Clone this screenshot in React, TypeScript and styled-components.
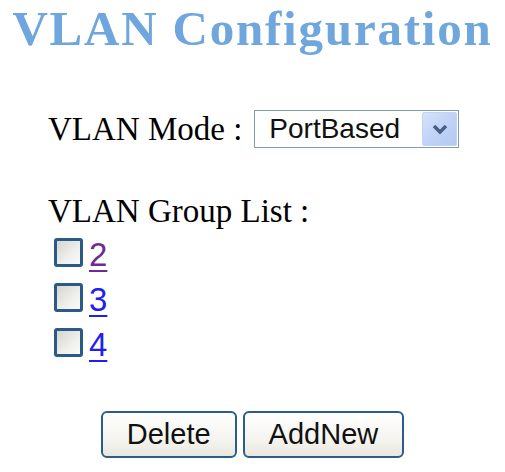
import React, { useState } from 'react';
import styled, { createGlobalStyle } from 'styled-components';

const GlobalStyle = createGlobalStyle`
  body {
    margin: 0;
    background: #fff;
    font-family: "Liberation Serif", "Times New Roman", serif;
    color: #000;
  }
`;

const Page = styled.div`
  display: flex;
  flex-direction: column;
  width: 505px;
`;

const Title = styled.h1`
  margin: 0;
  text-align: center;
  font-size: 49px;
  line-height: 57px;
  letter-spacing: 1.8px;
  font-weight: bold;
  color: #6ea6dd;
`;

const Content = styled.div`
  display: flex;
  flex-direction: column;
  padding-left: 48px;
  margin-top: 53px;
`;

const Row = styled.div`
  display: flex;
  align-items: center;
  height: 38px;
`;

const Label = styled.span`
  font-size: 33px;
  line-height: 38px;
  white-space: pre;
`;

const Select = styled.div`
  display: flex;
  align-items: center;
  box-sizing: border-box;
  width: 205px;
  height: 38px;
  margin-left: 12px;
  padding-left: 14px;
  border: 1px solid #7f9db9;
  background: #fff;
  font-family: "Liberation Sans", Arial, sans-serif;
  font-size: 28px;
  color: #111;
`;

const ArrowButton = styled.span`
  display: flex;
  align-items: center;
  justify-content: center;
  box-sizing: border-box;
  margin-left: auto;
  margin-right: 1px;
  width: 35px;
  height: 34px;
  border: 1px solid #c3d3f2;
  border-radius: 2px;
  background: linear-gradient(135deg, #d6e2fb 0%, #c1d3f7 50%, #b3c8f3 100%);
`;

const GroupLabel = styled(Label)`
  margin-top: 44px;
`;

const List = styled.div`
  display: flex;
  flex-direction: column;
  padding-left: 6px;
`;

const Item = styled.div`
  display: flex;
  align-items: center;
  gap: 6px;
  height: 45px;
`;

const Check = styled.input`
  appearance: none;
  margin: 0;
  box-sizing: border-box;
  width: 29px;
  height: 29px;
  border: 3px solid #2a5a87;
  border-radius: 3px;
  background: linear-gradient(135deg, #d6d6d0 0%, #efefeb 60%, #fbfbf9 100%);
`;

const GroupLink = styled.a<{ $visited?: boolean }>`
  font-family: "Liberation Sans", Arial, sans-serif;
  font-size: 33px;
  line-height: 30px;
  padding-top: 4px;
  color: ${(p) => (p.$visited ? '#6c2b98' : '#1f1ff2')};
  text-decoration: underline;
  text-decoration-thickness: 2px;
  text-underline-offset: 4px;
`;

const Actions = styled.div`
  display: flex;
  justify-content: center;
  gap: 6px;
  margin-top: 46px;
`;

const Button = styled.button`
  box-sizing: border-box;
  height: 47px;
  padding: 0 24px;
  border: 2px solid #2c5d8a;
  border-radius: 6px;
  background: linear-gradient(#ffffff 0%, #f5f4ef 60%, #e9e7de 100%);
  font-family: "Liberation Sans", Arial, sans-serif;
  font-size: 29px;
  color: #111;
`;

const groups = ['2', '3', '4'];

export default function App() {
  const [checked, setChecked] = useState<Record<string, boolean>>({});

  return (
    <>
      <GlobalStyle />
      <Page>
        <Title>VLAN Configuration</Title>
        <Content>
          <Row>
            <Label>VLAN Mode :</Label>
            <Select>
              PortBased
              <ArrowButton>
                <svg width="18" height="12" viewBox="0 0 18 12">
                  <path d="M3 3 L9 9 L15 3" fill="none" stroke="#4a5f88" strokeWidth="3.5" />
                </svg>
              </ArrowButton>
            </Select>
          </Row>
          <GroupLabel>VLAN Group List :</GroupLabel>
          <List>
            {groups.map((g, i) => (
              <Item key={g}>
                <Check
                  type="checkbox"
                  checked={!!checked[g]}
                  onChange={() => setChecked({ ...checked, [g]: !checked[g] })}
                />
                <GroupLink href="#" $visited={i === 0}>
                  {g}
                </GroupLink>
              </Item>
            ))}
          </List>
        </Content>
        <Actions>
          <Button>Delete</Button>
          <Button>AddNew</Button>
        </Actions>
      </Page>
    </>
  );
}
